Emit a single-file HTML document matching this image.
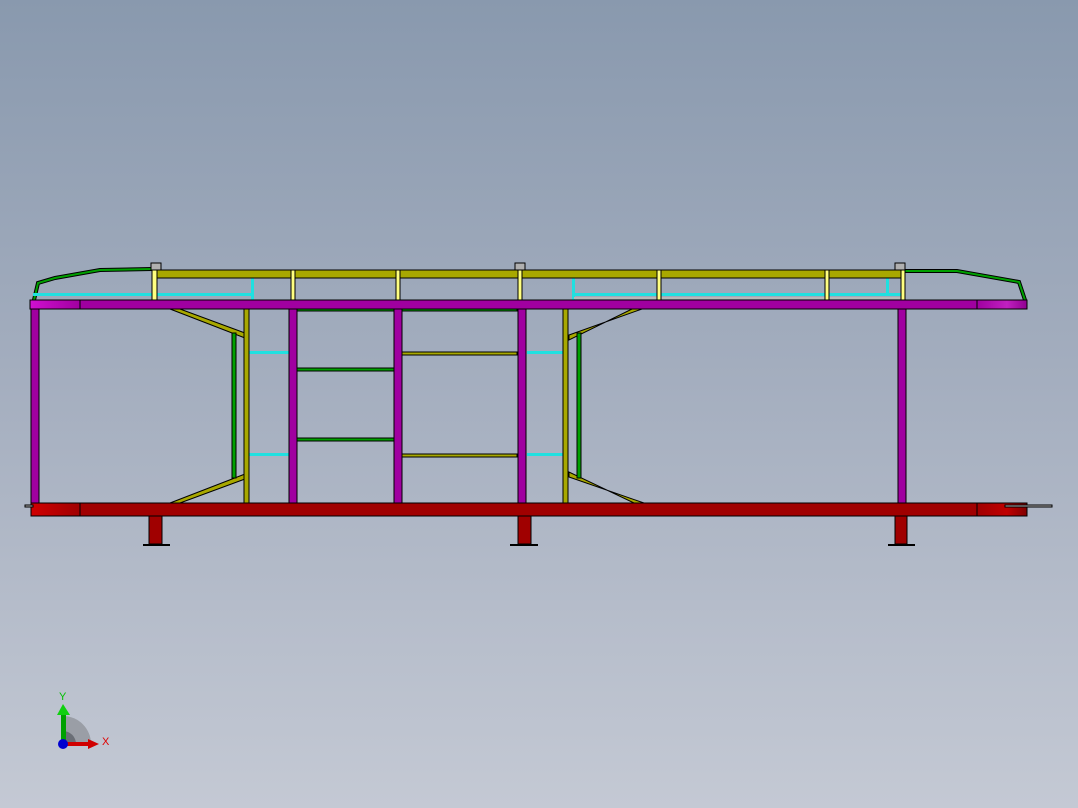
<!DOCTYPE html>
<html><head><style>
html,body{margin:0;padding:0;width:1078px;height:808px;overflow:hidden;}
body{background:linear-gradient(to bottom,#8999ae 0%,#a3adbe 45%,#c4c9d4 100%);}
svg{position:absolute;left:0;top:0;}
</style></head><body>
<svg width="1078" height="808" viewBox="0 0 1078 808">
<defs>
<linearGradient id="pl" x1="0" x2="1"><stop offset="0" stop-color="#d010d0"/><stop offset="1" stop-color="#a000a0"/></linearGradient>
<linearGradient id="pr" x1="0" x2="1"><stop offset="0" stop-color="#a000a0"/><stop offset="0.6" stop-color="#c020c0"/><stop offset="1" stop-color="#900090"/></linearGradient>
<linearGradient id="rl" x1="0" x2="1"><stop offset="0" stop-color="#d00000"/><stop offset="1" stop-color="#a00000"/></linearGradient>
<linearGradient id="rr" x1="0" x2="1"><stop offset="0" stop-color="#a00000"/><stop offset="0.6" stop-color="#c00000"/><stop offset="1" stop-color="#800000"/></linearGradient>
</defs>
<polyline points="34,300 38,283 55,278 100,270 152,269" fill="none" stroke="#000" stroke-width="4"/>
<polyline points="34,300 38,283 55,278 100,270 152,269" fill="none" stroke="#00a000" stroke-width="2" />
<polyline points="905,271 957,271 1019,282 1025,300" fill="none" stroke="#000" stroke-width="4"/>
<polyline points="905,271 957,271 1019,282 1025,300" fill="none" stroke="#00a000" stroke-width="2"/>
<g fill="#20e0e0">
<rect x="33" y="293" width="220" height="3"/>
<rect x="251" y="276" width="3" height="24"/>
<rect x="574" y="293" width="328" height="3"/>
<rect x="572" y="276" width="3" height="24"/>
<rect x="886" y="278" width="3" height="18"/>
<rect x="249" y="351" width="40" height="3"/>
<rect x="249" y="453" width="40" height="3"/>
<rect x="527" y="351" width="36" height="3"/>
<rect x="527" y="453" width="36" height="3"/>
</g>
<rect x="574" y="297" width="328" height="2" fill="#b8b8b8"/>
<g stroke="#000" stroke-width="1">
<rect x="155" y="270" width="750" height="8" fill="#a8a800"/>
<rect x="152" y="270" width="5" height="30" fill="#ffff80"/>
<rect x="291" y="270" width="4" height="30" fill="#ffff80"/>
<rect x="396" y="270" width="4" height="30" fill="#ffff80"/>
<rect x="518" y="270" width="4" height="30" fill="#ffff80"/>
<rect x="657" y="270" width="4" height="30" fill="#ffff80"/>
<rect x="825" y="270" width="4" height="30" fill="#ffff80"/>
<rect x="901" y="270" width="4" height="30" fill="#ffff80"/>
<rect x="151" y="263" width="10" height="7" fill="#b0b0b0"/>
<rect x="515" y="263" width="10" height="7" fill="#b0b0b0"/>
<rect x="895" y="263" width="10" height="7" fill="#b0b0b0"/>
<polygon points="170,309 180,309 245,333 245,338" fill="#a8a800"/>
<polygon points="170,503 180,503 245,479 245,474" fill="#a8a800"/>
<polygon points="632,309 642,309 569,335 569,340" fill="#a8a800"/>
<polygon points="634,503 644,503 569,477 569,472" fill="#a8a800"/>
<rect x="232" y="333" width="4" height="145" fill="#00a000"/>
<rect x="577" y="333" width="4" height="145" fill="#00a000"/>
<rect x="244" y="309" width="5" height="194" fill="#a8a800"/>
<rect x="563" y="309" width="5" height="194" fill="#a8a800"/>
<rect x="297" y="368" width="97" height="3" fill="#00a000"/>
<rect x="297" y="438" width="97" height="3" fill="#00a000"/>
<rect x="402" y="352" width="115" height="3" fill="#a8a800"/>
<rect x="402" y="454" width="115" height="3" fill="#a8a800"/>
<rect x="297" y="309" width="220" height="2" fill="#00a000"/>
<rect x="31" y="309" width="8" height="194" fill="#a000a0"/>
<rect x="289" y="309" width="8" height="194" fill="#a000a0"/>
<rect x="394" y="309" width="8" height="194" fill="#a000a0"/>
<rect x="518" y="309" width="8" height="194" fill="#a000a0"/>
<rect x="898" y="309" width="8" height="194" fill="#a000a0"/>
<rect x="30" y="300" width="997" height="9" fill="#a000a0"/>
<rect x="30" y="300" width="50" height="9" fill="url(#pl)"/>
<rect x="977" y="300" width="50" height="9" fill="url(#pr)"/>
<rect x="31" y="503" width="996" height="13" fill="#a00000"/>
<rect x="31" y="503" width="49" height="13" fill="url(#rl)"/>
<rect x="977" y="503" width="50" height="13" fill="url(#rr)"/>
<rect x="25" y="505" width="8" height="2" fill="#b0b0b0"/>
<rect x="1005" y="505" width="47" height="2" fill="#b0b0b0"/>
<rect x="149" y="516" width="13" height="28" fill="#a00000"/>
<rect x="518" y="516" width="13" height="28" fill="#a00000"/>
<rect x="895" y="516" width="12" height="28" fill="#a00000"/>
</g>
<rect x="143" y="544" width="27" height="2" fill="#000"/>
<rect x="510" y="544" width="28" height="2" fill="#000"/>
<rect x="888" y="544" width="27" height="2" fill="#000"/>
<path d="M63,716 A28,28 0 0 1 91,744 L63,744 Z" fill="#9a9ea6"/>
<path d="M63,731 A13,13 0 0 1 76,744 L63,744 Z" fill="#6a6e76"/>
<rect x="61" y="713" width="5" height="28" fill="#00a000"/>
<polygon points="57,715 63,704 70,715" fill="#10d010"/>
<rect x="64" y="742" width="24" height="4" fill="#d00000"/>
<polygon points="88,739 99,744 88,749" fill="#d00000"/>
<circle cx="63" cy="744" r="5" fill="#0000d0"/>
<text x="59" y="700" font-family="Liberation Sans,sans-serif" font-size="11" fill="#00c000">Y</text>
<text x="102" y="745" font-family="Liberation Sans,sans-serif" font-size="11" fill="#e00000">X</text>
</svg>
</body></html>
